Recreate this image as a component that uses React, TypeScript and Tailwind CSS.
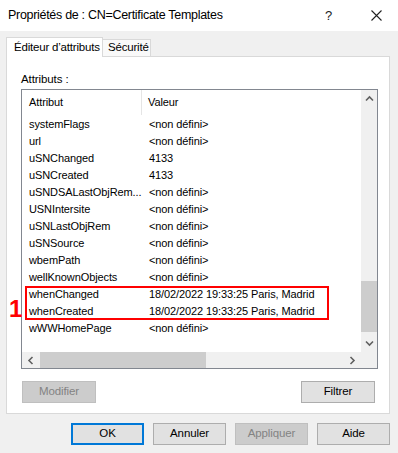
import React from "react";

const rows: [string, string][] = [
  ["systemFlags", "<non défini>"],
  ["url", "<non défini>"],
  ["uSNChanged", "4133"],
  ["uSNCreated", "4133"],
  ["uSNDSALastObjRem...", "<non défini>"],
  ["USNIntersite", "<non défini>"],
  ["uSNLastObjRem", "<non défini>"],
  ["uSNSource", "<non défini>"],
  ["wbemPath", "<non défini>"],
  ["wellKnownObjects", "<non défini>"],
  ["whenChanged", "18/02/2022 19:33:25 Paris, Madrid"],
  ["whenCreated", "18/02/2022 19:33:25 Paris, Madrid"],
  ["wWWHomePage", "<non défini>"],
];

function Chevron({ dir }: { dir: "up" | "down" | "left" | "right" }) {
  const rot = { up: 0, down: 180, left: 270, right: 90 }[dir];
  return (
    <svg width="9" height="9" viewBox="0 0 9 9" style={{ transform: `rotate(${rot}deg)` }}>
      <path d="M1 6.5 L4.5 3 L8 6.5" fill="none" stroke="#606060" strokeWidth="1.6" />
    </svg>
  );
}

function Btn({ label, disabled, primary, className = "" }: { label: string; disabled?: boolean; primary?: boolean; className?: string }) {
  return (
    <div
      className={
        "flex h-[22px] w-[73px] items-center justify-center text-[11.5px] " +
        (disabled
          ? "border border-[#bfbfbf] bg-[#cccccc] text-[#838383] "
          : primary
          ? "border-2 border-[#0078d7] bg-[#e1e1e1] text-black "
          : "border border-[#adadad] bg-[#e1e1e1] text-black ") +
        className
      }
    >
      {label}
    </div>
  );
}

export default function App() {
  return (
    <div
      className="relative h-[453px] w-[398px] overflow-hidden bg-[#f0f0f0] text-[11px] text-black"
      style={{ fontFamily: '"Liberation Sans", Arial, sans-serif', letterSpacing: "-0.1px" }}
    >
      {/* Title bar */}
      <div className="flex h-[31px] items-center bg-white pl-[8px]">
        <div className="flex-1 text-[12.5px] tracking-[-0.3px]">Propriétés de : CN=Certificate Templates</div>
        <div className="w-[10px] text-[13px] text-[#222]">?</div>
        <div className="ml-[36px] mr-[16px] flex items-center">
          <svg width="11" height="11" viewBox="0 0 11 11">
            <path d="M0.5 0.5 L10.5 10.5 M10.5 0.5 L0.5 10.5" stroke="#222" strokeWidth="1.1" />
          </svg>
        </div>
      </div>

      {/* Tabs */}
      <div className="ml-[6px] mt-[6px] flex items-end">
        <div className="relative z-10 -mb-[1px] flex h-[20px] w-[97px] items-center border border-b-0 border-[#d9d9d9] bg-white pl-[7px] text-[11.5px] tracking-[-0.2px]">
          Éditeur d’attributs
        </div>
        <div className="flex h-[17px] w-[48px] items-center border border-b-0 border-l-0 border-[#d9d9d9] bg-[#f9f9f9] pl-[5px] text-[11.5px] tracking-[-0.2px]">
          Sécurité
        </div>
      </div>

      {/* Panel */}
      <div className="ml-[6px] flex h-[358px] w-[384px] flex-col border border-[#d9d9d9] bg-white px-[14px]">
        <div className="mt-[13px] h-[18px] text-[11.5px] leading-[18px]">Attributs :</div>
        {/* List */}
        <div className="mt-[1px] grid h-[280px] w-[357px] grid-cols-[1fr_16px] grid-rows-[1fr_16px] border border-[#828790]">
          <div className="relative overflow-hidden">
            <div className="flex h-[25px] items-center">
              <div className="flex h-full w-[120px] items-center border-r border-[#e5e5e5] pl-[7px]">Attribut</div>
              <div className="pl-[6px]">Valeur</div>
            </div>
            <div className="relative mt-[1px]">
              {rows.map(([a, v]) => (
                <div key={a} className="flex h-[17px] items-center whitespace-nowrap">
                  <div className="w-[121px] pl-[7px]">{a}</div>
                  <div className="pl-[6px]">{v}</div>
                </div>
              ))}
              <div className="absolute left-[3px] top-[170px] h-[34px] w-[304px] border-2 border-[#ff0000]" />
            </div>
          </div>
          {/* vertical scrollbar */}
          <div className="flex flex-col bg-[#f0f0f0]">
            <div className="flex h-[17px] items-center justify-center">
              <Chevron dir="up" />
            </div>
            <div className="flex-1" />
            <div className="h-[51px] bg-[#cdcdcd]" />
            <div className="h-[3px]" />
            <div className="flex h-[17px] items-center justify-center">
              <Chevron dir="down" />
            </div>
          </div>
          {/* horizontal scrollbar */}
          <div className="flex items-stretch bg-[#f0f0f0]">
            <div className="flex w-[17px] items-center justify-center">
              <Chevron dir="left" />
            </div>
            <div className="ml-[1px] w-[166px] bg-[#cdcdcd]" />
            <div className="flex-1" />
            <div className="flex w-[17px] items-center justify-center">
              <Chevron dir="right" />
            </div>
          </div>
          <div className="bg-[#f0f0f0]" />
        </div>
        <div className="mt-[12px] flex justify-between pl-[1px]">
          <Btn label="Modifier" disabled className="w-[74px]" />
          <Btn label="Filtrer" className="w-[74px]" />
        </div>
      </div>

      {/* Bottom buttons */}
      <div className="mr-[8px] mt-[9px] flex justify-end gap-[9px]">
        <Btn label="OK" primary />
        <Btn label="Annuler" />
        <Btn label="Appliquer" disabled />
        <Btn label="Aide" />
      </div>

      {/* annotation number */}
      <div
        className="absolute left-[9px] top-[297px] text-[24px] font-bold leading-none text-[#ff0000]"
        style={{ fontFamily: '"Liberation Sans", Arial, sans-serif' }}
      >
        1
      </div>
    </div>
  );
}
